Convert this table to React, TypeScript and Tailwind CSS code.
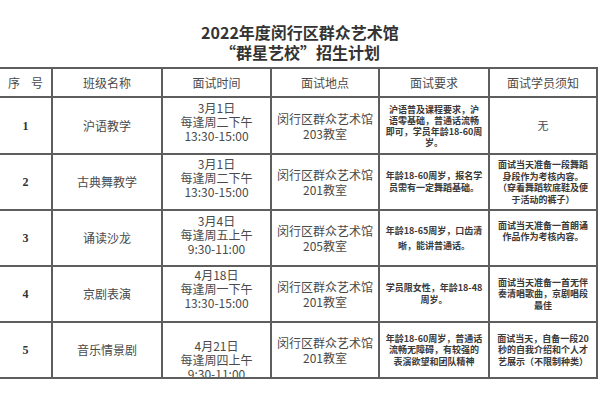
import React from "react";

type Row = {
  no: string;
  name: string;
  time: string[];
  timePad: string;
  place: string[];
  req: string[];
  reqLead: string;
  note: string[];
  notePad: string;
};

const rows: Row[] = [
  {
    no: "1",
    name: "沪语教学",
    time: ["3月1日", "每逢周二下午", "13:30-15:00"],
    timePad: "pt-[3px]",
    place: ["闵行区群众艺术馆", "203教室"],
    req: ["沪语普及课程要求，沪", "语零基础，普通话流畅", "即可，学员年龄18-60周", "岁。"],
    reqLead: "leading-[11px]",
    note: ["无"],
    notePad: "",
  },
  {
    no: "2",
    name: "古典舞教学",
    time: ["3月1日", "每逢周二下午", "13:30-15:00"],
    timePad: "pt-[2px]",
    place: ["闵行区群众艺术馆", "201教室"],
    req: ["年龄18-60周岁，报名学", "员需有一定舞蹈基础。"],
    reqLead: "leading-[12px]",
    note: ["面试当天准备一段舞蹈", "身段作为考核内容。", "（穿着舞蹈软底鞋及便", "于活动的裤子）"],
    notePad: "",
  },
  {
    no: "3",
    name: "诵读沙龙",
    time: ["3月4日", "每逢周五上午", "9:30-11:00"],
    timePad: "pt-[3px]",
    place: ["闵行区群众艺术馆", "205教室"],
    req: ["年龄18-65周岁，口齿清", "晰，能讲普通话。"],
    reqLead: "leading-[15px]",
    note: ["面试当天准备一首朗诵", "作品作为考核内容。"],
    notePad: "pb-[14px]",
  },
  {
    no: "4",
    name: "京剧表演",
    time: ["4月18日", "每逢周一下午", "13:30-15:00"],
    timePad: "pt-[1px]",
    place: ["闵行区群众艺术馆", "201教室"],
    req: ["学员限女性，年龄18-48", "周岁。"],
    reqLead: "leading-[12px]",
    note: ["面试当天准备一首无伴", "奏清唱歌曲，京剧唱段", "最佳"],
    notePad: "",
  },
  {
    no: "5",
    name: "音乐情景剧",
    time: ["4月21日", "每逢周四上午", "9:30-11:00"],
    timePad: "pt-[16px]",
    place: ["闵行区群众艺术馆", "201教室"],
    req: ["年龄18-60周岁，普通话", "流畅无障碍，有较强的", "表演欲望和团队精神"],
    reqLead: "leading-[11.5px]",
    note: ["面试当天，自备一段20", "秒的自我介绍和个人才", "艺展示（不限制种类）"],
    notePad: "",
  },
];

const cell = "border-r-2 border-b-2 border-[#5e5e5e] overflow-hidden";

export default function App() {
  return (
    <div
      className="w-[600px] h-[400px] bg-white text-[#4a4a4a] overflow-hidden"
      style={{ fontFamily: '"Noto Sans CJK SC", "Liberation Sans", sans-serif' }}
    >
      <div
        className="pt-[22px] h-[67px] flex flex-col items-center text-[16px] leading-[20px] font-bold text-[#333]"
        style={{ fontFamily: '"Noto Sans CJK SC", "Liberation Serif", serif' }}
      >
        <div>2022年度闵行区群众艺术馆</div>
        <div>“群星艺校”招生计划</div>
      </div>

      <div className="w-[598px] border-t-2 border-[#5e5e5e] grid grid-cols-[53px_110px_109px_108px_110px_108px] grid-rows-[29px_57px_56px_56px_56px_56px] text-[12px]">
        <div className={`${cell} flex items-center justify-center gap-[11px]`}>
          <span>序</span>
          <span>号</span>
        </div>
        <div className={`${cell} flex items-center justify-center`}>班级名称</div>
        <div className={`${cell} flex items-center justify-center`}>面试时间</div>
        <div className={`${cell} flex items-center justify-center`}>面试地点</div>
        <div className={`${cell} flex items-center justify-center`}>面试要求</div>
        <div className={`${cell} flex items-center justify-center`}>面试学员须知</div>

        {rows.map((r) => (
          <React.Fragment key={r.no}>
            <div
              className={`${cell} flex items-center justify-center font-bold text-[12px] text-[#333]`}
              style={{ fontFamily: '"Liberation Serif", serif' }}
            >
              {r.no}
            </div>
            <div className={`${cell} flex items-center justify-center`}>{r.name}</div>
            <div className={`${cell} flex flex-col items-center leading-[14px] ${r.timePad}`}>
              {r.time.map((t) => (
                <div key={t} className="whitespace-nowrap">{t}</div>
              ))}
            </div>
            <div className={`${cell} flex flex-col items-center justify-center leading-[15px]`}>
              {r.place.map((t) => (
                <div key={t} className="whitespace-nowrap">{t}</div>
              ))}
            </div>
            <div className={`${cell} flex flex-col items-center justify-center text-[9px] font-bold text-[#3a3a3a] ${r.reqLead}`}>
              {r.req.map((t) => (
                <div key={t} className="whitespace-nowrap">{t}</div>
              ))}
            </div>
            {r.note.length === 1 ? (
              <div className={`${cell} flex items-center justify-center text-[11px]`}>{r.note[0]}</div>
            ) : (
              <div className={`${cell} flex flex-col items-center justify-center text-[9px] font-bold text-[#3a3a3a] leading-[11.5px] ${r.notePad}`}>
                {r.note.map((t) => (
                  <div key={t} className="whitespace-nowrap">{t}</div>
                ))}
              </div>
            )}
          </React.Fragment>
        ))}
      </div>
    </div>
  );
}
